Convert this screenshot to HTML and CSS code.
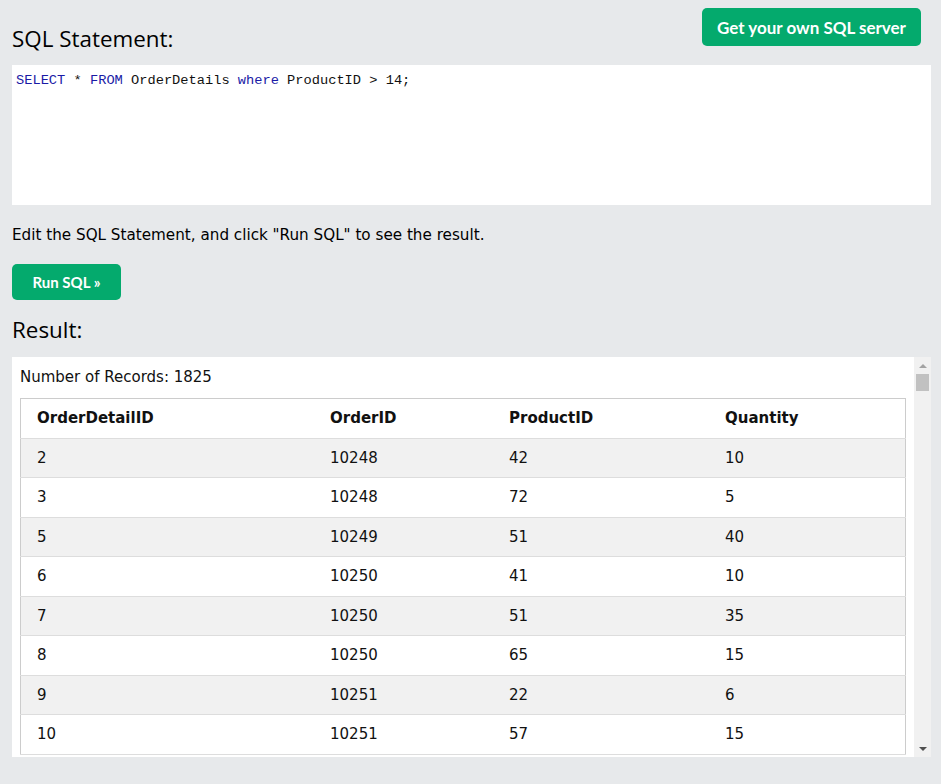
FILE: index.html
```html
<!DOCTYPE html>
<html>
<head>
<meta charset="utf-8">
<link rel="stylesheet" href="styles.css">
</head>
<body>
<div class="page">
  <div class="top">
    <h2 class="heading">SQL Statement:</h2>
    <a class="btn btn-server">Get your own SQL server</a>
  </div>
  <div class="code"><span class="kw">SELECT</span> * <span class="kw">FROM</span> OrderDetails <span class="kw">where</span> ProductID &gt; 14;</div>
  <p class="hint">Edit the SQL Statement, and click "Run SQL" to see the result.</p>
  <a class="btn btn-run">Run SQL »</a>
  <h2 class="heading result-heading">Result:</h2>
  <div class="result">
    <div class="result-body">
      <div class="count">Number of Records: 1825</div>
      <table class="grid">
        <tr><th class="c1">OrderDetailID</th><th class="c2">OrderID</th><th class="c3">ProductID</th><th class="c4">Quantity</th></tr>
        <tr><td>2</td><td>10248</td><td>42</td><td>10</td></tr>
        <tr><td>3</td><td>10248</td><td>72</td><td>5</td></tr>
        <tr><td>5</td><td>10249</td><td>51</td><td>40</td></tr>
        <tr><td>6</td><td>10250</td><td>41</td><td>10</td></tr>
        <tr><td>7</td><td>10250</td><td>51</td><td>35</td></tr>
        <tr><td>8</td><td>10250</td><td>65</td><td>15</td></tr>
        <tr><td>9</td><td>10251</td><td>22</td><td>6</td></tr>
        <tr><td>10</td><td>10251</td><td>57</td><td>15</td></tr>
      </table>
    </div>
    <div class="scrollbar">
      <div class="arrow up"></div>
      <div class="track"><div class="thumb"></div></div>
      <div class="arrow down"></div>
    </div>
  </div>
</div>
</body>
</html>
```
FILE: styles.css
```css
html, body {
  margin: 0;
  padding: 0;
  background: #e7e9eb;
}
body {
  font-family: "DejaVu Sans", Verdana, sans-serif;
  color: #000;
}
.page {
  padding: 8px 10px 0 12px;
}
.top {
  display: flex;
  justify-content: space-between;
  align-items: flex-start;
  height: 57px;
}
.heading {
  font-family: "Open Sans", "Noto Sans", sans-serif;
  font-weight: 400;
  font-size: 22.4px;
  line-height: 30px;
  margin: 16px 0 0 0;
  color: #000;
}
.btn {
  display: inline-flex;
  align-items: center;
  justify-content: center;
  background: #04aa6d;
  color: #fff;
  font-family: Lato, "Liberation Sans", sans-serif;
  font-weight: 700;
  border-radius: 5px;
  text-decoration: none;
}
.btn-server {
  height: 38px;
  width: 219px;
  font-size: 17px;
  margin-right: 10px;
}
.code {
  background: #fff;
  height: 140px;
  box-sizing: border-box;
  padding: 7px 4px;
  font-family: "Liberation Mono", monospace;
  font-size: 13.7px;
  line-height: 18px;
  color: #111;
}
.kw {
  color: #1a1aa6;
}
.hint {
  font-size: 15.2px;
  line-height: 20px;
  margin: 20px 0 0 0;
  color: #000;
}
.btn-run {
  margin-top: 19px;
  height: 36px;
  width: 109px;
  font-size: 15px;
}
.result-heading {
  margin-top: 15px;
}
.result {
  margin-top: 12px;
  height: 400px;
  display: flex;
  background: #fff;
  overflow: hidden;
}
.result-body {
  flex: 1;
  overflow: hidden;
  padding: 8px 8px 0 8px;
}
.count {
  font-size: 15px;
  line-height: 24px;
  color: #111;
  margin-bottom: 9px;
}
.grid {
  border-collapse: collapse;
  width: 886px;
  border: 1px solid #ccc;
  font-size: 15px;
  color: #111;
}
.grid th, .grid td {
  text-align: left;
  padding: 8px 8px 8px 16px;
  line-height: 22.5px;
  border-bottom: 1px solid #ddd;
}
.grid th {
  font-weight: 700;
  background: #fff;
}
.grid tr:nth-child(even) td {
  background: #f1f1f1;
}
.c1 { width: 269px; }
.c2 { width: 155px; }
.c3 { width: 192px; }
.c4 { width: auto; }
.scrollbar {
  width: 17px;
  background: #f1f1f1;
  display: flex;
  flex-direction: column;
  align-items: center;
}
.arrow {
  width: 17px;
  height: 17px;
  display: flex;
  align-items: center;
  justify-content: center;
}
.arrow::before {
  content: "";
  width: 0;
  height: 0;
  border-left: 4px solid transparent;
  border-right: 4px solid transparent;
}
.arrow.up::before {
  border-bottom: 4px solid #a3a3a3;
}
.arrow.down::before {
  border-top: 4px solid #505050;
}
.track {
  flex: 1;
  width: 100%;
  display: flex;
  justify-content: center;
}
.thumb {
  width: 13px;
  height: 17px;
  background: #c1c1c1;
}
```
